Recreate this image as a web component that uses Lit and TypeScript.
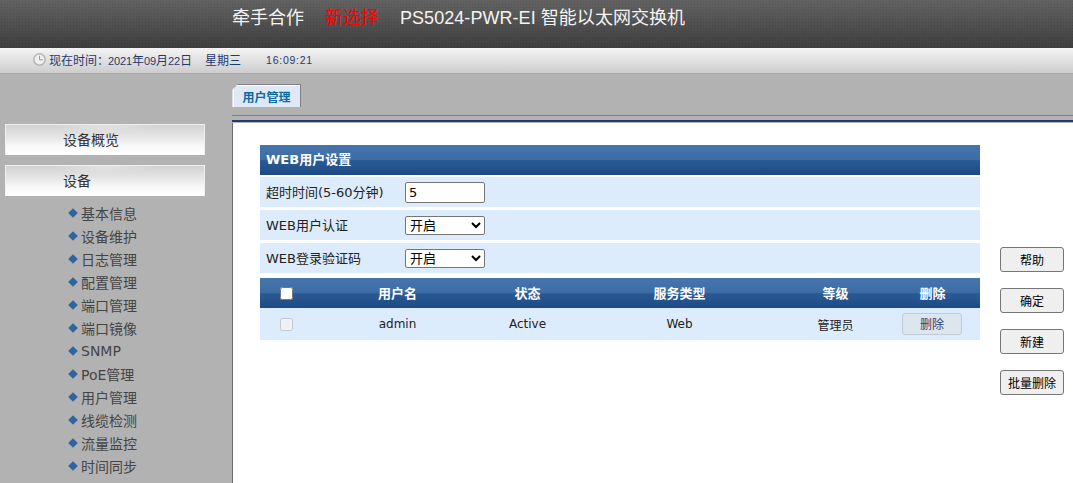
import { LitElement, html, css, svg } from "lit";
import { customElement } from "lit/decorators.js";

const MENU = ["基本信息","设备维护","日志管理","配置管理","端口管理","端口镜像","SNMP","PoE管理","用户管理","线缆检测","流量监控","时间同步"];
const clock = svg`<circle cx="6.5" cy="6.5" r="5.7" fill="#efefef" stroke="#b4b4b4" stroke-width="1.5"/><path d="M6.5 2.8v4h3.4" fill="none" stroke="#9a9a9a" stroke-width="1"/>`;

@customElement("app-root")
export class AppRoot extends LitElement {
  static styles = css`
    :host { display:block; width:1073px; height:483px; overflow:hidden; background:#b2b2b2;
      font-family:"DejaVu Sans","Noto Sans CJK SC",sans-serif; font-size:12px; color:#222; }
    * { box-sizing:border-box; }
    .top { height:48px; display:flex; padding:6px 0 0 232px; gap:21px; font-size:18px; line-height:24px; color:#f4f4f4;
      font-family:"Liberation Sans","Noto Sans CJK SC",sans-serif;
      background:radial-gradient(rgba(0,0,0,.1) 1px,transparent 1px) 0 0/3px 3px,linear-gradient(#636363,#3e3e3e); }
    .top .red { color:#f00; }
    .top .model { letter-spacing:.05px; }
    .time { height:26px; display:flex; align-items:center; padding:0 0 2px 33px; color:#1f3a72; font-size:12px;
      font-family:"Noto Sans CJK SC",sans-serif; white-space:nowrap;
      background:linear-gradient(#f4f4f4,#cdcdcd); border-bottom:1px solid #a8a8a8; }
    .time svg { width:13px; height:13px; margin-right:3px; flex:none; }
    .time b { font-weight:400; width:59px; flex:none; }
    .time .n { font:11px "Liberation Sans",sans-serif; letter-spacing:-.12px; }
    .time .d { margin-left:13px; }
    .time .c { margin-left:25px; letter-spacing:.75px; font:10.5px "Liberation Sans",sans-serif; }
    .body { display:grid; grid-template-columns:232px 1fr; height:409px; }
    .side { padding-top:50px; padding-left:5px; }
    .mbtn { width:200px; height:31px; padding-left:57px; font-size:14px; line-height:30px; color:#333;
      border:1px solid #f0f0f0; border-width:1px 1px 0 1px;
      background:radial-gradient(ellipse 50px 9px at 50% 0,rgba(236,236,236,.6) 0,transparent 100%),linear-gradient(#d2d2d2,#e6e6e6 40%,#f8f8f8 70%,#fff); }
    .mbtn + .mbtn { margin-top:10px; }
    .sub { list-style:none; margin:5px 0 0; padding:0 0 0 64px; }
    .sub li { height:23px; display:flex; align-items:center; gap:3px; font-size:14px; color:#444; }
    .sub li i { width:8px; height:8px; background:#2f649f; transform:rotate(45deg) scale(.85); margin-right:1px; flex:none; }
    .tabs { height:42px; padding-top:10px; display:flex; border-bottom:1px solid #808080; }
    .tab { position:relative; width:69px; height:23px; background:#dfe9f5; border:1px solid #808080; border-bottom:0; border-left-color:#ddd;
      box-shadow:inset 1px 1px #fff;
      color:#0a6aa0; font-size:12px; font-weight:700; text-align:center; line-height:23px; clip-path:polygon(6px 0,100% 0,100% 100%,0 100%,0 6px); font-family:"Noto Sans CJK SC",sans-serif; }
    .tab::before { content:""; position:absolute; left:-3px; top:1px; width:9px; height:1px; background:#808080; transform:rotate(-45deg); }
    .rule { height:2px; margin:4px 0 1px; background:#1f3b78; }
    .panel { background:#fff; height:360px; display:flex; padding:22px 9px 0 27px; border-left:1px solid #6c6c6c; }
    .form { width:720px; }
    .cap { height:30px; padding-left:6px; font-weight:700; color:#fff; font-size:13px; line-height:30px;
      background:linear-gradient(#4676ad,#3c6ca4 50%,#2a5a94 52%,#1d4a85); }
    .row { height:30px; margin-top:3px; background:#ddecfd; display:flex; align-items:center; padding-left:6px; }
    .cap + .row { margin-top:2px; }
    .row label { width:139px; font-size:13px; color:#222; padding-bottom:1px; }
    input[type=text] { width:80px; height:21px; font:13px "DejaVu Sans",sans-serif; padding:0 3px; border:1px solid #767676; border-radius:2px; background:#fff; color:#000; outline:0; }
    select { width:80px; height:19px; font:13px "Liberation Sans","Noto Sans CJK SC",sans-serif; padding:0; border:1px solid #767676; border-radius:2px; background:#fff; color:#000; }
    table { width:100%; border-collapse:collapse; margin-top:5px; table-layout:fixed; }
    th { height:30px; color:#fff; font-size:13px; font-weight:700; background:linear-gradient(#4676ad,#3c6ca4 50%,#2a5a94 52%,#1d4a85); font-family:"Noto Sans CJK SC",sans-serif; padding:0 0 2px; }
    td { height:32px; background:#ddecfd; text-align:center; font-size:12px; color:#222; padding:0; }
    .tcol1 { width:53px; } .tcol2 { width:169px; } .tcol3 { width:91px; } .tcol4 { width:213px; } .tcol5 { width:99px; } .tcol6 { width:95px; }
    input[type=checkbox] { width:13px; height:13px; margin:0; vertical-align:middle; }
    .del { width:60px; height:22px; border:1px solid #c2cbd8; border-radius:3px; background:#dde5ef; color:#2f3f6c; font:12px "Noto Sans CJK SC",sans-serif; padding:0 0 1px; margin-left:-1px; }
    .acts { margin-left:20px; padding-top:102px; display:flex; flex-direction:column; gap:16px; }
    .acts button { width:64px; height:25px; background:#efefef; border:1px solid #767676; border-radius:3px; color:#000; font:12px "Noto Sans CJK SC",sans-serif; padding:0; }
  `;
  render() {
    return html`
      <div class="top"><span>牵手合作</span><span class="red">新选择</span><span class="model">PS5024-PWR-EI 智能以太网交换机</span></div>
      <div class="time"><svg viewBox="0 0 13 13">${clock}</svg><b>现在时间：</b><span><span class="n">2021</span>年<span class="n">09</span>月<span class="n">22</span>日</span><span class="d">星期三</span><span class="c">16:09:21</span></div>
      <div class="body">
        <aside class="side">
          <div class="mbtn">设备概览</div>
          <div class="mbtn">设备</div>
          <ul class="sub">${MENU.map((m) => html`<li><i></i>${m}</li>`)}</ul>
        </aside>
        <div class="main">
          <div class="tabs"><div class="tab">用户管理</div></div>
          <div class="rule"></div>
          <div class="panel">
            <div class="form">
              <div class="cap">WEB用户设置</div>
              <div class="row"><label>超时时间(5-60分钟)</label><input type="text" .value=${"5"} /></div>
              <div class="row"><label>WEB用户认证</label><select><option>开启</option></select></div>
              <div class="row"><label>WEB登录验证码</label><select><option>开启</option></select></div>
              <table>
                <colgroup><col class="tcol1"/><col class="tcol2"/><col class="tcol3"/><col class="tcol4"/><col class="tcol5"/><col class="tcol6"/></colgroup>
                <tr><th><input type="checkbox" /></th><th>用户名</th><th>状态</th><th>服务类型</th><th>等级</th><th>删除</th></tr>
                <tr><td><input type="checkbox" disabled /></td><td>admin</td><td>Active</td><td>Web</td><td>管理员</td><td><button class="del">删除</button></td></tr>
              </table>
            </div>
            <div class="acts"><button>帮助</button><button>确定</button><button>新建</button><button>批量删除</button></div>
          </div>
        </div>
      </div>`;
  }
}
